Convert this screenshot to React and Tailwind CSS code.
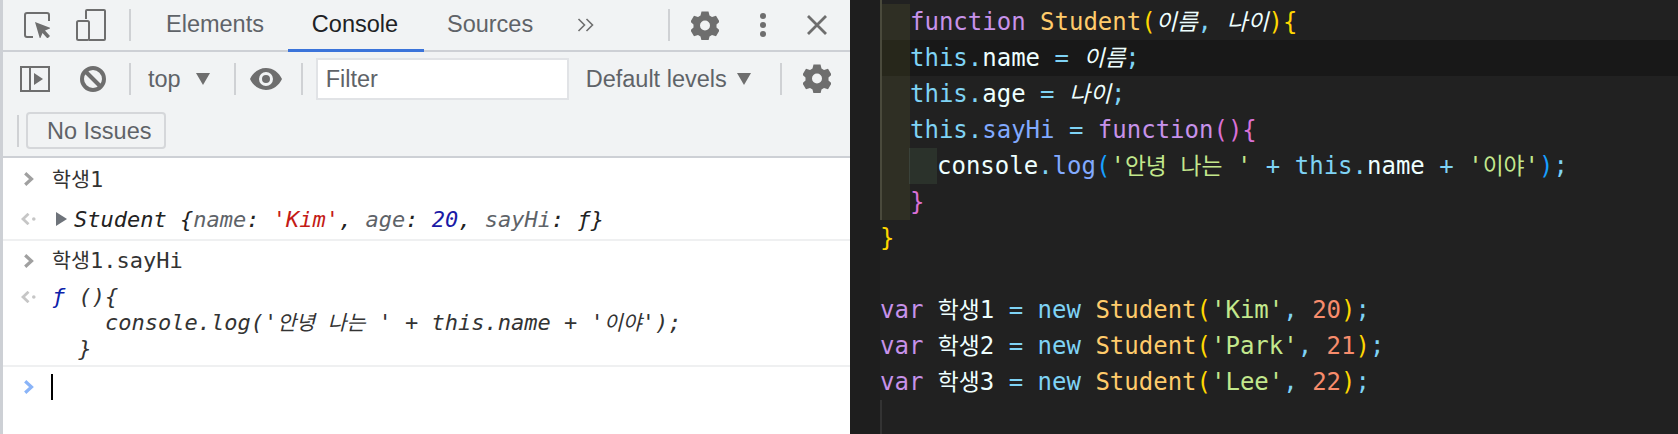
import React from "react";

const ui = { fontFamily: '"Liberation Sans", Arial, sans-serif' };
const mono = { fontFamily: '"DejaVu Sans Mono", "Noto Sans CJK KR", monospace' };

function Gear({ className }) {
  return (
    <svg viewBox="0 0 28 29" className={className}>
      <path fillRule="evenodd" fill="#6e6e6e" d="M10.500 0.500h7l1 4 2.500 1.400 4-1.200 3.500 6-3 2.900v2.800l3 2.900-3.500 6-4-1.200-2.500 1.400-1 4h-7l-1-4-2.500-1.400-4 1.200-3.500-6 3-2.900v-2.800l-3-2.900 3.500-6 4 1.200 2.500-1.400zM14 9.500a5 5 0 1 0 0 10 5 5 0 0 0 0-10z" />
    </svg>
  );
}
function Divider({ className }) {
  return <div className={"w-[2px] bg-[#cfd1d4] " + className} />;
}
function Arrow({ className }) {
  return (
    <svg viewBox="0 0 14 12" className={"w-[14px] h-[12px] " + className}><path d="M0 0h14L7 12z" fill="#6e6e6e" /></svg>
  );
}
function Chevron({ color = "#a0a0a0" }) {
  return (
    <svg viewBox="0 0 10 14" className="w-[10px] h-[14px]" fill="none"><path d="M1.200 1.200 7.500 7l-6.300 5.800" stroke={color} strokeWidth="3.200" /></svg>
  );
}
function Back() {
  return (
    <svg viewBox="0 0 15 12" className="w-[15px] h-[12px]" fill="none">
      <path d="M7.500 0.800 2 6l5.500 5.200" stroke="#c6c6c6" strokeWidth="2.800" />
      <circle cx="12.800" cy="6" r="1.800" fill="#c6c6c6" />
    </svg>
  );
}
const C = ({ c, i, children }) => <span className={i ? "italic" : ""} style={{ color: c }}>{children}</span>;
const H = ({ children }) => <span className="text-[22.8px]">{children}</span>;
const H2 = ({ children }) => <span className="text-[20.6px]">{children}</span>;

const P = "#c792ea", Y = "#ffcb6b", G = "#ffd700", W = "#eeffff", B = "#82aaff", K = "#da70d6", S = "#c3e88d", O = "#f78c6c", LB = "#179fff", TH = "#7fd3f5";

function CodeRow({ indent = 0, guide2, active, children }) {
  return (
    <div className={"flex h-9 leading-9 whitespace-pre " + (active ? "bg-[#181818]" : "")}>
      {indent > 0 && <div className={"w-[30px] h-full border-l-2 border-[#4a4a3c] " + (active ? "bg-[#27271b]" : "bg-[#2f2f24]")} />}
      {guide2 && <div className="w-[28px] h-full bg-[#2b322b] border-l border-[#3a423a] ml-[-1px]" />}
      <div>{children}</div>
    </div>
  );
}
function VarRow({ n, name, age }) {
  return (
    <CodeRow>
      <C c={P}>var</C> <C c={W}><H>학생</H>{n}</C> <C c={TH}>=</C> <C c={TH}>new</C> <C c={Y}>Student</C><C c={G}>(</C><C c={S}>'{name}'</C><C c={TH}>,</C> <C c={O}>{age}</C><C c={G}>)</C><C c={TH}>;</C>
    </CodeRow>
  );
}

export default function App() {
  return (
    <div className="flex w-[1678px] h-[434px] overflow-hidden">
      {/* DevTools */}
      <div className="w-[850px] shrink-0 h-full bg-white border-l-[3px] border-[#cdd0d5] flex flex-col text-[23.5px]" style={ui}>
        <div className="h-[52px] shrink-0 bg-[#f1f3f4] border-b-2 border-[#cdd0d5] flex items-center text-[#5f6368]">
          <svg viewBox="0 0 26 26" className="w-[26px] h-[26px] ml-[21px]" fill="none">
            <path d="M9 25H3a2 2 0 0 1-2-2V3a2 2 0 0 1 2-2h20a2 2 0 0 1 2 2v6" stroke="#6e6e6e" strokeWidth="2" />
            <path d="M11 10l16 6-6 2.500 5 5.500-2.500 2.500-5-5.500-2.500 6z" fill="#6e6e6e" />
          </svg>
          <svg viewBox="0 0 30 32" className="w-[30px] h-[32px] ml-[26px]" fill="none">
            <path d="M10 10V2a1 1 0 0 1 1-1h17a1 1 0 0 1 1 1v28a1 1 0 0 1-1 1H13" stroke="#6e6e6e" strokeWidth="2" />
            <rect x="1" y="12" width="12" height="19" rx="1.500" stroke="#6e6e6e" strokeWidth="2" />
          </svg>
          <Divider className="h-8 ml-[23px]" />
          <span className="ml-[35px]">Elements</span>
          <div className="relative ml-[24px] w-[136px] h-[52px] -mb-[2px] self-start border-b-[3px] border-[#3b74da] flex items-center justify-center text-[#202124]"><span className="-ml-[2px]">Console</span></div>
          <span className="ml-[23px]">Sources</span>
          <svg viewBox="0 0 17 14" className="w-[17px] h-[14px] ml-[44px]" fill="none"><path d="M1.500 1 7.500 7l-6 6M9.500 1l6 6-6 6" stroke="#6e6e6e" strokeWidth="1.600" /></svg>
          <Divider className="h-8 ml-[74px]" />
          <Gear className="w-[28px] h-[29px] ml-[21px]" />
          <svg viewBox="0 0 8 26" className="w-[8px] h-[26px] ml-[40px]" fill="#6e6e6e"><circle cx="4" cy="4" r="3" /><circle cx="4" cy="13" r="3" /><circle cx="4" cy="22" r="3" /></svg>
          <svg viewBox="0 0 20 20" className="w-[20px] h-[20px] ml-[40px]" fill="none"><path d="M1 1l18 18M19 1 1 19" stroke="#6e6e6e" strokeWidth="2.800" /></svg>
        </div>
        <div className="h-[106px] shrink-0 bg-[#f1f3f4] border-b-2 border-[#cdd0d5] text-[#5f6368]">
          <div className="flex items-center h-[53px]">
            <svg viewBox="0 0 30 26" className="w-[30px] h-[26px] ml-[17px]" fill="none">
              <rect x="1" y="1" width="28" height="24" stroke="#6e6e6e" strokeWidth="2" />
              <path d="M10 1v24" stroke="#6e6e6e" strokeWidth="2" />
              <path d="M14 7l9 6-9 6z" fill="#6e6e6e" />
            </svg>
            <svg viewBox="0 0 26 26" className="w-[26px] h-[26px] ml-[30px]" fill="none">
              <circle cx="13" cy="13" r="11" stroke="#6e6e6e" strokeWidth="4" />
              <path d="M5 5l16 16" stroke="#6e6e6e" strokeWidth="4" />
            </svg>
            <Divider className="h-8 ml-[23px]" />
            <span className="ml-[17px] pt-[2px]">top</span>
            <Arrow className="ml-[15px]" />
            <Divider className="h-8 ml-[24px]" />
            <svg viewBox="0 0 32 22" className="w-[32px] h-[22px] ml-[14px]">
              <path fillRule="evenodd" d="M16 0C9 0 3 4.500 0 11c3 6.500 9 11 16 11s13-4.500 16-11C29 4.500 23 0 16 0zm0 18a7 7 0 1 1 0-14 7 7 0 0 1 0 14zm0-11a4 4 0 1 0 0 8 4 4 0 0 0 0-8z" fill="#6e6e6e" />
            </svg>
            <Divider className="h-8 ml-[19px]" />
            <div className="ml-[13px] w-[253px] h-[42px] bg-white border-2 border-[#e1e3e6] flex items-center pl-[8px] pt-[2px]">Filter</div>
            <span className="ml-[17px] pt-[2px]">Default levels</span>
            <Arrow className="ml-[10px]" />
            <Divider className="h-8 ml-[29px]" />
            <Gear className="w-[28px] h-[29px] ml-[21px]" />
          </div>
          <div className="flex items-center h-[51px]">
            <Divider className="h-8 ml-[14px]" />
            <div className="ml-[7px] w-[140px] h-[37px] border-2 border-[#d5d7da] rounded-[4px] flex items-center pl-[19px] pt-[2px]">No Issues</div>
          </div>
        </div>
        <div className="flex-1 text-[22px] text-[#333] whitespace-pre" style={mono}>
          <div className="h-[39px] flex items-center pt-[3px]">
            <div className="w-[49px] pl-[21px] flex"><Chevron /></div><span><H2>학생</H2>1</span>
          </div>
          <div className="h-[44px] flex items-center border-b-2 border-[#eff0f1] pt-[2px]">
            <div className="w-[53px] pl-[18px] flex"><Back /></div>
            <svg viewBox="0 0 11 14" className="w-[11px] h-[14px] mr-[7px]"><path d="M0 0l11 7L0 14z" fill="#6e737a" /></svg>
            <span className="italic text-[#222]">Student {"{"}<C c="#5e6368">name</C>: <C c="#c41a16">'Kim'</C>, <C c="#5e6368">age</C>: <C c="#1a1aa6">20</C>, <C c="#5e6368">sayHi</C>: ƒ{"}"}</span>
          </div>
          <div className="h-[39px] flex items-center">
            <div className="w-[49px] pl-[21px] flex"><Chevron /></div><span><H2>학생</H2>1.sayHi</span>
          </div>
          <div className="h-[87px] flex border-b-2 border-[#eff0f1] pt-[4px]">
            <div className="w-[49px] pl-[18px] pt-[7px] flex items-start"><Back /></div>
            <div className="italic leading-[26px]"><C c="#0d22aa">ƒ</C>{" (){\n    console.log('"}<H2>안녕 나는</H2>{" ' + this.name + '"}<H2>이야</H2>{"');\n  }"}</div>
          </div>
          <div className="flex items-center h-[38px] mt-[1px]">
            <div className="w-[49px] pl-[21px] flex"><Chevron color="#8ab4f8" /></div>
            <div className="w-[2px] h-[26px] bg-black -ml-[1px]" />
          </div>
        </div>
      </div>
      {/* Editor */}
      <div className="flex-1 h-full flex text-[24px] text-[#eeffff]" style={mono}>
        <div className="w-[30px] shrink-0 h-full bg-[#1e1e1e]" />
        <div className="flex-1 h-full bg-[#212121]">
          <div className="w-[2px] h-[4px] bg-[#4a4a3c]" />
          <CodeRow indent={1}>
            <C c={P}>function</C> <C c={Y}>Student</C><C c={G}>(</C><C c={W} i><H>이름</H></C><C c={TH}>,</C> <C c={W} i><H>나이</H></C><C c={G}>)</C><C c={G}>{"{"}</C>
          </CodeRow>
          <CodeRow indent={1} active><C c={TH}>this.</C><C c={W}>name</C> <C c={TH}>=</C> <C c={W} i><H>이름</H></C><C c={TH}>;</C></CodeRow>
          <CodeRow indent={1}><C c={TH}>this.</C><C c={W}>age</C> <C c={TH}>=</C> <C c={W} i><H>나이</H></C><C c={TH}>;</C></CodeRow>
          <CodeRow indent={1}><C c={TH}>this.</C><C c={B}>sayHi</C> <C c={TH}>=</C> <C c={P}>function</C><C c={K}>(){"{"}</C></CodeRow>
          <CodeRow indent={1} guide2><C c={W}>console</C><C c={TH}>.</C><C c={B}>log</C><C c={LB}>(</C><C c={S}>'<H>안녕 나는</H> '</C> <C c={TH}>+</C> <C c={TH}>this.</C><C c={W}>name</C> <C c={TH}>+</C> <C c={S}>'<H>이야</H>'</C><C c={LB}>)</C><C c={TH}>;</C></CodeRow>
          <CodeRow indent={1}><C c={K}>{"}"}</C></CodeRow>
          <CodeRow><C c={G}>{"}"}</C></CodeRow>
          <CodeRow />
          <VarRow n="1" name="Kim" age="20" />
          <VarRow n="2" name="Park" age="21" />
          <VarRow n="3" name="Lee" age="22" />
          <div className="w-[2px] h-[34px] bg-[#333]" />
        </div>
      </div>
    </div>
  );
}
